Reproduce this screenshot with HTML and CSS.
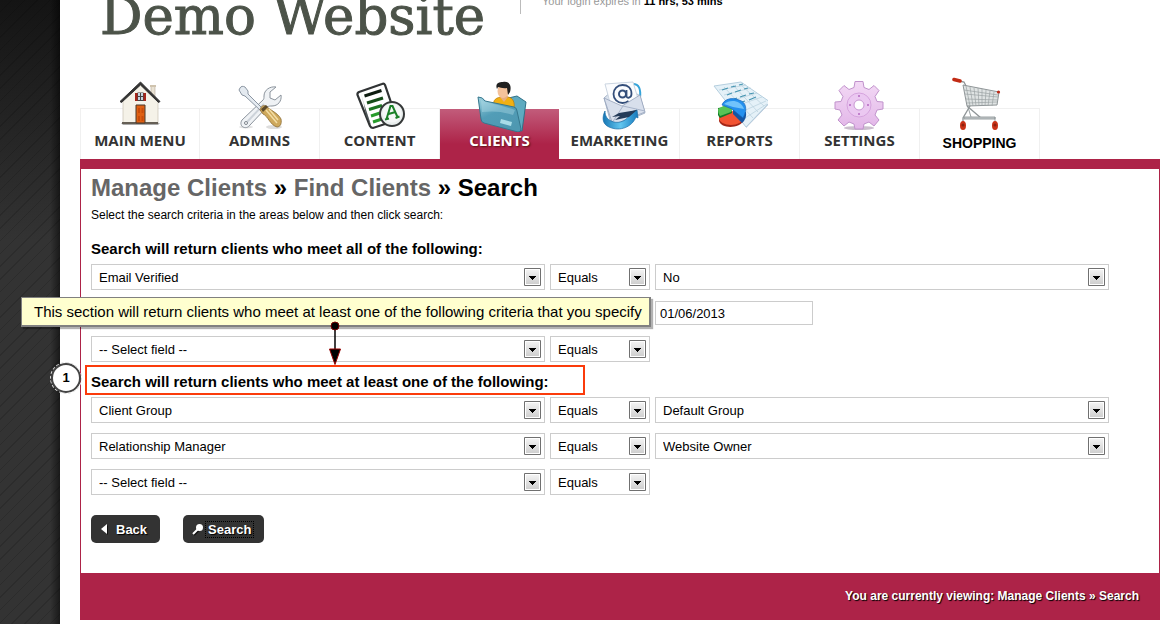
FILE: index.html
```html
<!DOCTYPE html>
<html lang="en">
<head>
<meta charset="utf-8">
<title>Manage Clients » Find Clients » Search</title>
<link rel="stylesheet" href="styles.css">
</head>
<body>
<div class="page">
  <header class="header">
    <div class="brand">Demo Website</div>
    <p class="session">Your login expires in <strong>11 hrs, 53 mins</strong></p>
  </header>

  <nav class="tabs" aria-label="Main">
    <a class="tab" href="#">
      <svg class="tab-icon" viewBox="0 0 56 56" aria-hidden="true">
        <path d="M9 47h39l-2 2H11z" fill="#aaa"/>
        <path d="M39 10h4v14h-4z" fill="#e9e2d3" stroke="#b5aa98" stroke-width=".6"/>
        <path d="M38 9h6v2h-6z" fill="#cfc3ae"/>
        <path d="M11 25 28 8l18 17v22H11z" fill="#f5f2e8" stroke="#c8c2b2" stroke-width=".7"/>
        <path d="M10 46h36v2H10z" fill="#655f55"/>
        <path d="M8 25.500 28.500 6 48 25.500l-1.500 1L28.500 9 9.500 26.500z" fill="#333" stroke="#333"/>
        <path d="M23 17h11v8H23z" fill="#a5261b"/>
        <path d="M25.500 16.500h6v8.500h-6z" fill="#444"/>
        <path d="M26 17h2v3h-2zM29 17h2v3h-2zM26 21h2v3h-2zM29 21h2v3h-2z" fill="#c4d6e2"/>
        <path d="M24 29h9v18h-9z" fill="#df6012" stroke="#4b3a2c"/>
        <path d="M26 32h2v5h-2zM29.500 32h2v5h-2zM26 40h2v5h-2zM29.500 40h2v5h-2z" fill="#c94c0a"/>
      </svg>
      <span class="tab-label">MAIN MENU</span>
    </a>
    <a class="tab" href="#">
      <svg class="tab-icon" viewBox="0 0 56 56" aria-hidden="true">
        <ellipse cx="42" cy="51" rx="8" ry="2" fill="#ddd"/>
        <ellipse cx="14" cy="51" rx="7" ry="1.500" fill="#e2e2e2"/>
        <path d="M44 11c-6-1-12 3-12 9 0 2 0 3-1 4L10 44c-2 3-1 6 1 7s5 1 7-2l17-18c2-1 3-1 5-1 6 0 10-5 9-11l-6 5-5-2 0-6z" fill="#eff2f5" stroke="#8c949d"/>
        <path d="M32 28 15 46" stroke="#cdd3da" stroke-width="2"/>
        <circle cx="14" cy="47" r="1.500" fill="#fff" stroke="#7d858d"/>
        <path d="M8 12c1-2 3-2 5-1l3 4v3l15 15-2 2-16-15-3-1-3-5z" fill="#e4eaf0" stroke="#7f8a97" stroke-width=".9"/>
        <path d="M28 34c1-4 3-5 6-4 4 4 12 7 15 13 1 5-1 8-4 8-7-2-9-11-14-13z" fill="#cfa95c" stroke="#8a6b34" stroke-width=".8"/>
        <path d="m34 34 11 13M37 33l9 11" stroke="#f2dda5" stroke-width="1.500"/>
        <path d="m29 33 5-4 2 2-5 5z" fill="#5d4b2b"/>
      </svg>
      <span class="tab-label">ADMINS</span>
    </a>
    <a class="tab" href="#">
      <svg class="tab-icon" viewBox="0 0 56 56" aria-hidden="true">
        <path d="m7 16 23-8q2-1 3 1l12 35-24 8q-2 0-3-2L5.500 19q-.5-2 1.500-3z" fill="#fff" stroke="#303334" stroke-width="2.200"/>
        <path d="m9 18 10 31-5-12z" fill="#bfc5c6"/>
        <path d="m12 28 7 21-5-9z" fill="#4b5355"/>
        <path d="m12.500 20 17-5.500" stroke="#0d1c10" stroke-width="3"/>
        <path d="m15 27 16-5" stroke="#164c19" stroke-width="3"/>
        <path d="m17 33.500 13-4" stroke="#1d7522" stroke-width="3"/>
        <path d="m19 40 9-3M21 46l9-3" stroke="#289b2c" stroke-width="3"/>
        <circle cx="40" cy="38" r="12" fill="#e9eeed" stroke="#353838" stroke-width="2"/>
        <circle cx="40" cy="37" r="9.500" fill="#fff" opacity=".55"/>
        <path d="m34.500 43 4-13h2l5 11m-9-3 7-2M33 43.500l4-1m6.500-.5 4-1.500" fill="none" stroke="#1b8028" stroke-width="2"/>
      </svg>
      <span class="tab-label">CONTENT</span>
    </a>
    <a class="tab tab-active" href="#" aria-current="page">
      <svg class="tab-icon" viewBox="0 0 56 56" aria-hidden="true">
        <defs>
          <linearGradient id="folder" x1="0" y1="0" x2=".6" y2="1"><stop offset="0" stop-color="#a1d4e1"/><stop offset=".5" stop-color="#529db7"/><stop offset="1" stop-color="#4e98b1"/></linearGradient>
        </defs>
        <path d="m24 25 21-5 9 6-4 29-17-4z" fill="#5faac0" stroke="#2e7188"/>
        <path d="M22 30c-2-6 3-9 8-9h6c5 1 7 5 6 12l-9 4z" fill="#f1b012" stroke="#b77a05" stroke-width=".7"/>
        <path d="m28 21 4 5 4-5-1-4h-6z" fill="#e8ae82"/>
        <ellipse cx="31" cy="15" rx="5.500" ry="7" fill="#f4c29b"/>
        <path d="M25 13c-2-5 1-7 6-7 6-1 9 3 7 10l-2 3-1-7c-4 1-7-1-9-1z" fill="#202020"/>
        <path d="M6 21q5 0 7 4l29 6q3 1 3 4l4 18q0 3-3 3L12 47q-3-1-3-4z" fill="url(#folder)" stroke="#35768d"/>
        <path d="M9 24c6 3 20 5 34 10l-2 5C29 35 20 35 10 36z" fill="#c0e6ee" opacity=".35"/>
        <path d="m29 43 11 3-1 4-11-3z" fill="#a8dce8"/>
      </svg>
      <span class="tab-label">CLIENTS</span>
    </a>
    <a class="tab" href="#">
      <svg class="tab-icon" viewBox="0 0 56 56" aria-hidden="true">
        <defs>
          <linearGradient id="swoosh" x1="0" y1="0" x2="1" y2="0"><stop offset="0" stop-color="#1777b5"/><stop offset=".5" stop-color="#62c6ef"/><stop offset="1" stop-color="#1579bd"/></linearGradient>
        </defs>
        <path d="M41 8c6 0 8 5 7 14" fill="none" stroke="#35a4da" stroke-width="2"/>
        <path d="m12 22 17-15 19 13 5 17-33 14z" fill="#dae2ed" stroke="#a9b7ca"/>
        <path d="M13 8 41 6l6 20-27 8z" fill="#fbfcfe" stroke="#cbd5e1"/>
        <circle cx="30.500" cy="18" r="3.500" fill="none" stroke="#344e7a" stroke-width="2"/>
        <path d="M34.500 14v6c0 3 5 2 5-2 0-6-4-9-9-9s-9 4-9 9 4 9 9 9q3 0 6-2" fill="none" stroke="#344e7a" stroke-width="1.800"/>
        <path d="m12 22 18 8 18-11 5 17-32 13z" fill="#d8dfec" stroke="#95a2ba" stroke-width=".8"/>
        <path d="m20 47 11-17 22 5" fill="none" stroke="#a8b4ca"/>
        <path d="M13 35c-3 6-3 13 4 16 11 5 23 0 27-10l2 1-1-8-12 4 4 2c-4 6-12 8-18 5-4-2-6-5-6-10z" fill="url(#swoosh)" stroke="#176ca5" stroke-width=".7"/>
        <path d="m27 37 18-3-8 7-14 3 5-4-8 1z" fill="#243b59"/>
      </svg>
      <span class="tab-label">EMARKETING</span>
    </a>
    <a class="tab" href="#">
      <svg class="tab-icon" viewBox="0 0 56 56" aria-hidden="true">
        <path d="m34 52 24-25-2-1-22 22z" fill="#aebbcf"/>
        <path d="m2 10 27-4 29 20-24 25z" fill="#e5f1f8" stroke="#b5cfdf"/>
        <path d="m7 14 27-5M12 19l27-7M18 25l27-8M24 30l26-9M29 36l25-11M33 42l22-14M12 11l29 31M21 9l25 27M28 8l24 22" fill="none" stroke="#bcd3df" stroke-width=".8"/>
        <path d="m10 14 6-2m3-1 5-1m3-1 4-1M15 19l5-2m3-1 6-2m3-1 4-1M20 24l5-2m3-1 6-2m3-1 5-1M27 27l6-2m4-1 7-3" stroke="#4795b2" stroke-width="1.200"/>
        <path d="M7 38v7c2 8 21 8 25-1l-5-8z" fill="#a32617"/>
        <ellipse cx="19" cy="42" rx="12" ry="7" fill="#f25332"/>
        <path d="M6 32v7q1 2 2 3l12-5-1-7z" fill="#137a29"/>
        <path d="m6 33 7-4 8 3-2 4-11 4q-2-3-2-7z" fill="#58c456"/>
        <path d="m21 38 9 9q5-4 4-11l-13-4z" fill="#1355a3"/>
        <path d="M10 29c2-6 10-8 17-5 7 2 9 9 4 18L20 33z" fill="#2490ee" stroke="#1566ba" stroke-width=".7"/>
        <path d="M12 28c6-5 17-4 20 5l-11-2z" fill="#71c3fb"/>
      </svg>
      <span class="tab-label">REPORTS</span>
    </a>
    <a class="tab" href="#">
      <svg class="tab-icon" viewBox="0 0 56 56" aria-hidden="true">
        <defs>
          <linearGradient id="gear" x1="0" y1="0" x2="0" y2="1"><stop offset="0" stop-color="#f3d9f5"/><stop offset="1" stop-color="#e2b6e8"/></linearGradient>
        </defs>
        <ellipse cx="27" cy="52" rx="15" ry="2" fill="#cbbfce"/>
        <path d="M23 5.500h8l1 6 5 2 5-4 5 5-4 6 2 5 6 .5v7l-6 1-2 5 4 5-5 6-5-4-5 2-1 5h-8l-1-5-5-2-5 4-6-6 4-5-2-5-5-1v-7l6-.5 2-5-4-6 5-5 5 4 5-2z" fill="url(#gear)" stroke="#c193cc"/>
        <circle cx="27" cy="29" r="12" fill="#ebc8f1" stroke="#d6a4de"/>
        <circle cx="27" cy="29" r="5" fill="#fff" stroke="#c798d1"/>
        <g fill="#b568c1"><circle cx="27" cy="20" r="1"/><circle cx="27" cy="38" r="1"/><circle cx="18" cy="29" r="1"/><circle cx="36" cy="29" r="1"/></g>
      </svg>
      <span class="tab-label">SETTINGS</span>
    </a>
    <a class="tab" href="#">
      <svg class="tab-icon" viewBox="0 0 56 56" aria-hidden="true">
        <path d="m7 5 5 1 3 6 3 18-7 12v6M15 30l14 12" fill="none" stroke="#8f9597" stroke-width="1.300"/>
        <path d="m11 9 36 7-2 13-30 1z" fill="#dfe3e3" stroke="#8f9597"/>
        <path d="m14 10 4 20m0-19 3 19m1-18 2 18m2-18 1 18m3-17v17m4-16-1 16m5-15-2 15m6-14-2 14M12 14l34 5M13 18l33 3M14 23l32 1M15 27l30-1" fill="none" stroke="#9ba2a4" stroke-width=".7"/>
        <path d="M12 41h31v2H12zm31 0v6M16 31l3 10" fill="#c6cbcc" stroke="#90979a" stroke-width=".9"/>
        <path d="m2 3.500 6 1.500" stroke="#c22b14" stroke-width="3.500" stroke-linecap="round"/>
        <circle cx="46.500" cy="16" r="1.600" fill="#bd2815"/>
        <ellipse cx="11" cy="49.500" rx="3" ry="4.500" fill="#c93217"/>
        <ellipse cx="43" cy="49.500" rx="3" ry="4.500" fill="#c93217"/>
        <circle cx="11" cy="49" r="1.500" fill="#8c2210"/><circle cx="43" cy="49" r="1.500" fill="#8c2210"/>
      </svg>
      <span class="tab-label tab-label-plain">SHOPPING</span>
    </a>
  </nav>

  <main class="panel">
    <h1 class="title"><a href="#">Manage Clients</a> » <a href="#">Find Clients</a> » Search</h1>
    <p class="intro">Select the search criteria in the areas below and then click search:</p>

    <form class="search-form">
      <section class="group">
        <h2 class="group-title">Search will return clients who meet all of the following:</h2>
        <div class="rows">
          <div class="row">
            <select class="field" aria-label="Field"><option>Email Verified</option></select>
            <select class="field" aria-label="Comparison"><option>Equals</option></select>
            <select class="field" aria-label="Value"><option>No</option></select>
          </div>
          <div class="row">
            <input class="date" type="text" aria-label="Date value" value="01/06/2013">
            <div class="callout">This section will return clients who meet at least one of the following criteria that you specify
              <svg class="pointer" viewBox="0 0 14 44" aria-hidden="true">
                <path d="M7 5v24" stroke="#000" stroke-width="1.500"/>
                <circle cx="7" cy="5" r="4" fill="#000" stroke="#700"/>
                <path d="M1.500 28h11L7 43.500z" fill="#000" stroke="#900"/>
              </svg>
            </div>
          </div>
          <div class="row">
            <select class="field" aria-label="Field"><option>-- Select field --</option></select>
            <select class="field" aria-label="Comparison"><option>Equals</option></select>
          </div>
        </div>
      </section>

      <section class="group">
        <h2 class="group-title group-title-marked">Search will return clients who meet at least one of the following:<span class="step">1</span></h2>
        <div class="rows">
          <div class="row">
            <select class="field" aria-label="Field"><option>Client Group</option></select>
            <select class="field" aria-label="Comparison"><option>Equals</option></select>
            <select class="field" aria-label="Value"><option>Default Group</option></select>
          </div>
          <div class="row">
            <select class="field" aria-label="Field"><option>Relationship Manager</option></select>
            <select class="field" aria-label="Comparison"><option>Equals</option></select>
            <select class="field" aria-label="Value"><option>Website Owner</option></select>
          </div>
          <div class="row">
            <select class="field" aria-label="Field"><option>-- Select field --</option></select>
            <select class="field" aria-label="Comparison"><option>Equals</option></select>
          </div>
        </div>
      </section>

      <div class="actions">
        <button class="button" type="button">
          <svg class="button-icon" viewBox="0 0 12 14" aria-hidden="true"><path d="M8 3v10L3 8z" fill="#111"/><path d="M7 2v10L1 7z" fill="#fff"/></svg>
          <span class="button-text">Back</span>
        </button>
        <button class="button" type="button">
          <svg class="button-icon" viewBox="0 0 12 14" aria-hidden="true"><path d="m2 13 5-5" stroke="#111" stroke-width="2"/><circle cx="7.500" cy="5.500" r="3.500" fill="#fff"/><path d="m1 12 5-5" stroke="#fff" stroke-width="2"/></svg>
          <span class="button-text button-text-focus">Search</span>
        </button>
      </div>
    </form>
  </main>

  <footer class="footer">You are currently viewing: <a href="#">Manage Clients</a> » <a href="#">Search</a></footer>
</div>
</body>
</html>
```
FILE: styles.css
```css
* {
  box-sizing: border-box;
}

body {
  margin: 0;
  padding-left: 60px;
  background:
    linear-gradient(90deg, transparent 50px, rgba(0, 0, 0, .5) 60px, transparent 60px),
    repeating-linear-gradient(135deg, transparent 0 8px, rgba(0, 0, 0, .14) 8px 9px),
    linear-gradient(#141414, #333 240px);
  color: #000;
  font-family: "Liberation Sans", Arial, sans-serif;
  font-size: 13px;
}

h1,
h2,
p {
  margin: 0;
}

a {
  color: inherit;
  text-decoration: none;
}

.page {
  min-height: 100vh;
  padding: 0 14px 4px 20px;
  background: #fff;
}

.header {
  display: grid;
  grid-template: 48px / 440px 1fr;
}

.brand {
  align-self: end;
  padding-left: 20px;
  color: #4c5349;
  font-family: "DejaVu Serif", serif;
  font-size: 53px;
  line-height: 64px;
  white-space: nowrap;
  -webkit-text-stroke: 1px #4c5349;
}

.session {
  align-self: start;
  height: 14px;
  padding-left: 21px;
  border-left: 1px solid #bbb;
  color: #999;
  font-size: 11px;
  line-height: 3px;
}

.session strong {
  color: #000;
}

.tabs {
  display: flex;
  margin-top: 60px;
}

.tab {
  display: flex;
  flex-direction: column;
  align-items: center;
  width: 120px;
  height: 51px;
  border: solid #f0f0f0;
  border-width: 1px 1px 0 0;
  color: #333;
}

.tab:first-child {
  border-left-width: 1px;
}

.tab-active {
  border-color: transparent;
  background: linear-gradient(#c25c7b, #ad2348 70%) padding-box;
  color: #fff;
}

.tab-icon {
  width: 56px;
  height: 56px;
  flex: none;
  margin-top: -33px;
}

.tab-label {
  font-family: "Open Sans", sans-serif;
  font-size: 15px;
  font-weight: 700;
  line-height: 16px;
}

.tab-active .tab-label {
  text-shadow: 1px 1px 2px #511;
}

.tab-label-plain {
  color: #000;
  font-family: "Liberation Sans", Arial, sans-serif;
  font-size: 14px;
  line-height: 22px;
}

.panel {
  padding: 4px 50px 30px 10px;
  border: solid #ad2348;
  border-width: 10px 1px 0;
}

.title {
  font-size: 24px;
  line-height: 30px;
}

.title a {
  color: #666;
}

.intro {
  font-size: 12px;
  line-height: 24px;
}

.search-form {
  padding-top: 7px;
}

.group {
  margin-bottom: 5px;
}

.group-title {
  width: fit-content;
  font-size: 15px;
  line-height: 30px;
}

.group-title-marked {
  position: relative;
}

.group-title-marked::after {
  content: "";
  position: absolute;
  inset: -2px -36px 2px -6px;
  border: 2px solid #fb3b0b;
}

.step {
  position: absolute;
  top: -4px;
  left: -40px;
  width: 30px;
  height: 30px;
  border: 2px solid #444;
  border-radius: 50%;
  outline: 1px dashed #ddd;
  background: #fff;
  font-size: 13px;
  line-height: 26px;
  text-align: center;
}

.rows {
  display: grid;
  gap: 10px;
}

.row {
  position: relative;
  display: grid;
  grid-template-columns: 1fr 100px 1fr;
  gap: 5px;
  min-height: 26px;
  align-items: center;
}

.field {
  width: 100%;
  height: 26px;
  padding: 0 24px 0 7px;
  border: 1px solid #ccc;
  border-radius: 0;
  appearance: none;
  background: #fff url("data:image/svg+xml,%3Csvg xmlns='http://www.w3.org/2000/svg' width='17' height='18'%3E%3ClinearGradient id='g' x2='0' y2='1'%3E%3Cstop stop-color='%23f2f2f2'/%3E%3Cstop offset='1' stop-color='%23cfcfcf'/%3E%3C/linearGradient%3E%3Cpath d='M.5.5h16v17H.5z' fill='%23fff' stroke='%23707070'/%3E%3Cpath d='M2 2h13v14H2z' fill='url(%23g)'/%3E%3Cpath d='M5 8h7v1h-1v1h-1v1H9v1H8v-1H7v-1H6V9H5z'/%3E%3C/svg%3E") no-repeat right 3px center;
  color: #000;
  font: 13px "Liberation Sans", Arial, sans-serif;
}

.date {
  grid-column: 3;
  width: 158px;
  height: 24px;
  padding: 0 4px;
  border: 1px solid #ccc;
  color: #000;
  font: 13px "Liberation Sans", Arial, sans-serif;
}

.callout {
  position: absolute;
  top: -3px;
  left: -70px;
  z-index: 1;
  width: 630px;
  height: 30px;
  padding-left: 12px;
  border: 1px solid #808080;
  border-width: 1px 2px 2px 1px;
  background: #ffffcf;
  box-shadow: 2px 2px 1px rgba(0, 0, 0, .3);
  font-size: 15px;
  line-height: 28px;
  white-space: nowrap;
}

.pointer {
  position: absolute;
  top: 23px;
  left: 306px;
  width: 14px;
  height: 44px;
}

.actions {
  display: flex;
  gap: 23px;
  padding-top: 15px;
}

.button {
  display: flex;
  align-items: center;
  gap: 1px;
  height: 28px;
  padding: 0 10px 0 9px;
  border: 0;
  border-radius: 5px;
  background: #333;
  color: #fff;
  font: bold 13px "Liberation Sans", Arial, sans-serif;
  text-shadow: 1px 1px 1px #000;
}

.button-icon {
  width: 12px;
  height: 14px;
}

.button-text {
  padding: 0 2px;
  border: 1px solid transparent;
}

.button-text-focus {
  border: 1px dotted #000;
}

.footer {
  padding: 0 21px;
  background: #ad2348;
  color: #fff;
  font-size: 12px;
  font-weight: 700;
  line-height: 47px;
  text-align: right;
  text-shadow: 1px 1px 1px #000;
}
```
